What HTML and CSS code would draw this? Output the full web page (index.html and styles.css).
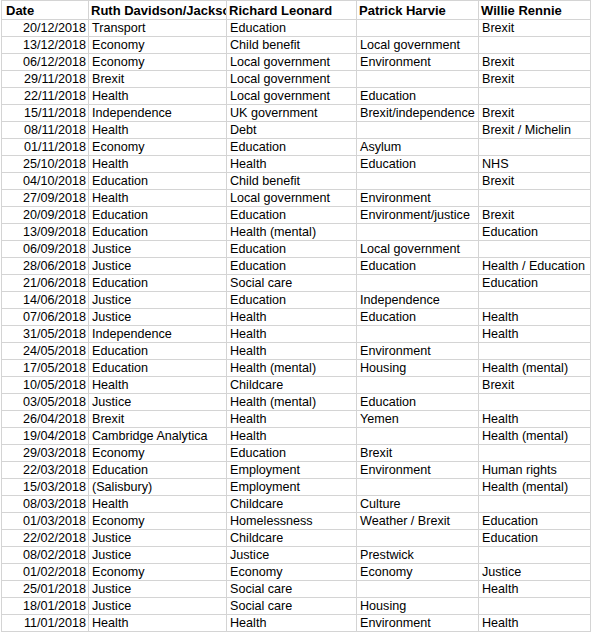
FILE: index.html
```html
<!DOCTYPE html>
<html>
<head>
<meta charset="utf-8">
<link rel="stylesheet" href="styles.css">
</head>
<body>
<div class="sheet">
  <div class="c h first">Date</div><div class="c h">Ruth Davidson/Jackson</div><div class="c h">Richard Leonard</div><div class="c h">Patrick Harvie</div><div class="c h">Willie Rennie</div>
  <div class="c d">20/12/2018</div><div class="c">Transport</div><div class="c">Education</div><div class="c"></div><div class="c">Brexit</div>
  <div class="c d">13/12/2018</div><div class="c">Economy</div><div class="c">Child benefit</div><div class="c">Local government</div><div class="c"></div>
  <div class="c d">06/12/2018</div><div class="c">Economy</div><div class="c">Local government</div><div class="c">Environment</div><div class="c">Brexit</div>
  <div class="c d">29/11/2018</div><div class="c">Brexit</div><div class="c">Local government</div><div class="c"></div><div class="c">Brexit</div>
  <div class="c d">22/11/2018</div><div class="c">Health</div><div class="c">Local government</div><div class="c">Education</div><div class="c"></div>
  <div class="c d">15/11/2018</div><div class="c">Independence</div><div class="c">UK government</div><div class="c">Brexit/independence</div><div class="c">Brexit</div>
  <div class="c d">08/11/2018</div><div class="c">Health</div><div class="c">Debt</div><div class="c"></div><div class="c">Brexit / Michelin</div>
  <div class="c d">01/11/2018</div><div class="c">Economy</div><div class="c">Education</div><div class="c">Asylum</div><div class="c"></div>
  <div class="c d">25/10/2018</div><div class="c">Health</div><div class="c">Health</div><div class="c">Education</div><div class="c">NHS</div>
  <div class="c d">04/10/2018</div><div class="c">Education</div><div class="c">Child benefit</div><div class="c"></div><div class="c">Brexit</div>
  <div class="c d">27/09/2018</div><div class="c">Health</div><div class="c">Local government</div><div class="c">Environment</div><div class="c"></div>
  <div class="c d">20/09/2018</div><div class="c">Education</div><div class="c">Education</div><div class="c">Environment/justice</div><div class="c">Brexit</div>
  <div class="c d">13/09/2018</div><div class="c">Education</div><div class="c">Health (mental)</div><div class="c"></div><div class="c">Education</div>
  <div class="c d">06/09/2018</div><div class="c">Justice</div><div class="c">Education</div><div class="c">Local government</div><div class="c"></div>
  <div class="c d">28/06/2018</div><div class="c">Justice</div><div class="c">Education</div><div class="c">Education</div><div class="c">Health / Education</div>
  <div class="c d">21/06/2018</div><div class="c">Education</div><div class="c">Social care</div><div class="c"></div><div class="c">Education</div>
  <div class="c d">14/06/2018</div><div class="c">Justice</div><div class="c">Education</div><div class="c">Independence</div><div class="c"></div>
  <div class="c d">07/06/2018</div><div class="c">Justice</div><div class="c">Health</div><div class="c">Education</div><div class="c">Health</div>
  <div class="c d">31/05/2018</div><div class="c">Independence</div><div class="c">Health</div><div class="c"></div><div class="c">Health</div>
  <div class="c d">24/05/2018</div><div class="c">Education</div><div class="c">Health</div><div class="c">Environment</div><div class="c"></div>
  <div class="c d">17/05/2018</div><div class="c">Education</div><div class="c">Health (mental)</div><div class="c">Housing</div><div class="c">Health (mental)</div>
  <div class="c d">10/05/2018</div><div class="c">Health</div><div class="c">Childcare</div><div class="c"></div><div class="c">Brexit</div>
  <div class="c d">03/05/2018</div><div class="c">Justice</div><div class="c">Health (mental)</div><div class="c">Education</div><div class="c"></div>
  <div class="c d">26/04/2018</div><div class="c">Brexit</div><div class="c">Health</div><div class="c">Yemen</div><div class="c">Health</div>
  <div class="c d">19/04/2018</div><div class="c">Cambridge Analytica</div><div class="c">Health</div><div class="c"></div><div class="c">Health (mental)</div>
  <div class="c d">29/03/2018</div><div class="c">Economy</div><div class="c">Education</div><div class="c">Brexit</div><div class="c"></div>
  <div class="c d">22/03/2018</div><div class="c">Education</div><div class="c">Employment</div><div class="c">Environment</div><div class="c">Human rights</div>
  <div class="c d">15/03/2018</div><div class="c">(Salisbury)</div><div class="c">Employment</div><div class="c"></div><div class="c">Health (mental)</div>
  <div class="c d">08/03/2018</div><div class="c">Health</div><div class="c">Childcare</div><div class="c">Culture</div><div class="c"></div>
  <div class="c d">01/03/2018</div><div class="c">Economy</div><div class="c">Homelessness</div><div class="c">Weather / Brexit</div><div class="c">Education</div>
  <div class="c d">22/02/2018</div><div class="c">Justice</div><div class="c">Childcare</div><div class="c"></div><div class="c">Education</div>
  <div class="c d">08/02/2018</div><div class="c">Justice</div><div class="c">Justice</div><div class="c">Prestwick</div><div class="c"></div>
  <div class="c d">01/02/2018</div><div class="c">Economy</div><div class="c">Economy</div><div class="c">Economy</div><div class="c">Justice</div>
  <div class="c d">25/01/2018</div><div class="c">Justice</div><div class="c">Social care</div><div class="c"></div><div class="c">Health</div>
  <div class="c d">18/01/2018</div><div class="c">Justice</div><div class="c">Social care</div><div class="c">Housing</div><div class="c"></div>
  <div class="c d">11/01/2018</div><div class="c">Health</div><div class="c">Health</div><div class="c">Environment</div><div class="c">Health</div>
</div>
</body>
</html>
```

FILE: styles.css
```css
html, body {
  margin: 0;
  padding: 0;
  background: #ffffff;
}

.sheet {
  display: grid;
  grid-template-columns: 87px 138px 130px 122px 112px;
  grid-template-rows: 19px;
  grid-auto-rows: 17px;
  margin-left: 1px;
  width: max-content;
  border-left: 1px solid #d4d4d4;
  border-top: 1px solid #d4d4d4;
  font-family: "Liberation Sans", Arial, sans-serif;
  font-size: 12.6px;
  color: #000000;
}

.c {
  box-sizing: border-box;
  border-right: 1px solid #d4d4d4;
  border-bottom: 1px solid #d4d4d4;
  padding: 0 2px 0 3px;
  line-height: 16px;
  white-space: nowrap;
  overflow: hidden;
}

.h {
  font-weight: bold;
  font-size: 13px;
  padding-top: 1px;
  line-height: 17px;
  padding-left: 2px;
}

.first {
  padding-left: 4px;
}

.d {
  text-align: right;
  padding-right: 2px;
}
```
